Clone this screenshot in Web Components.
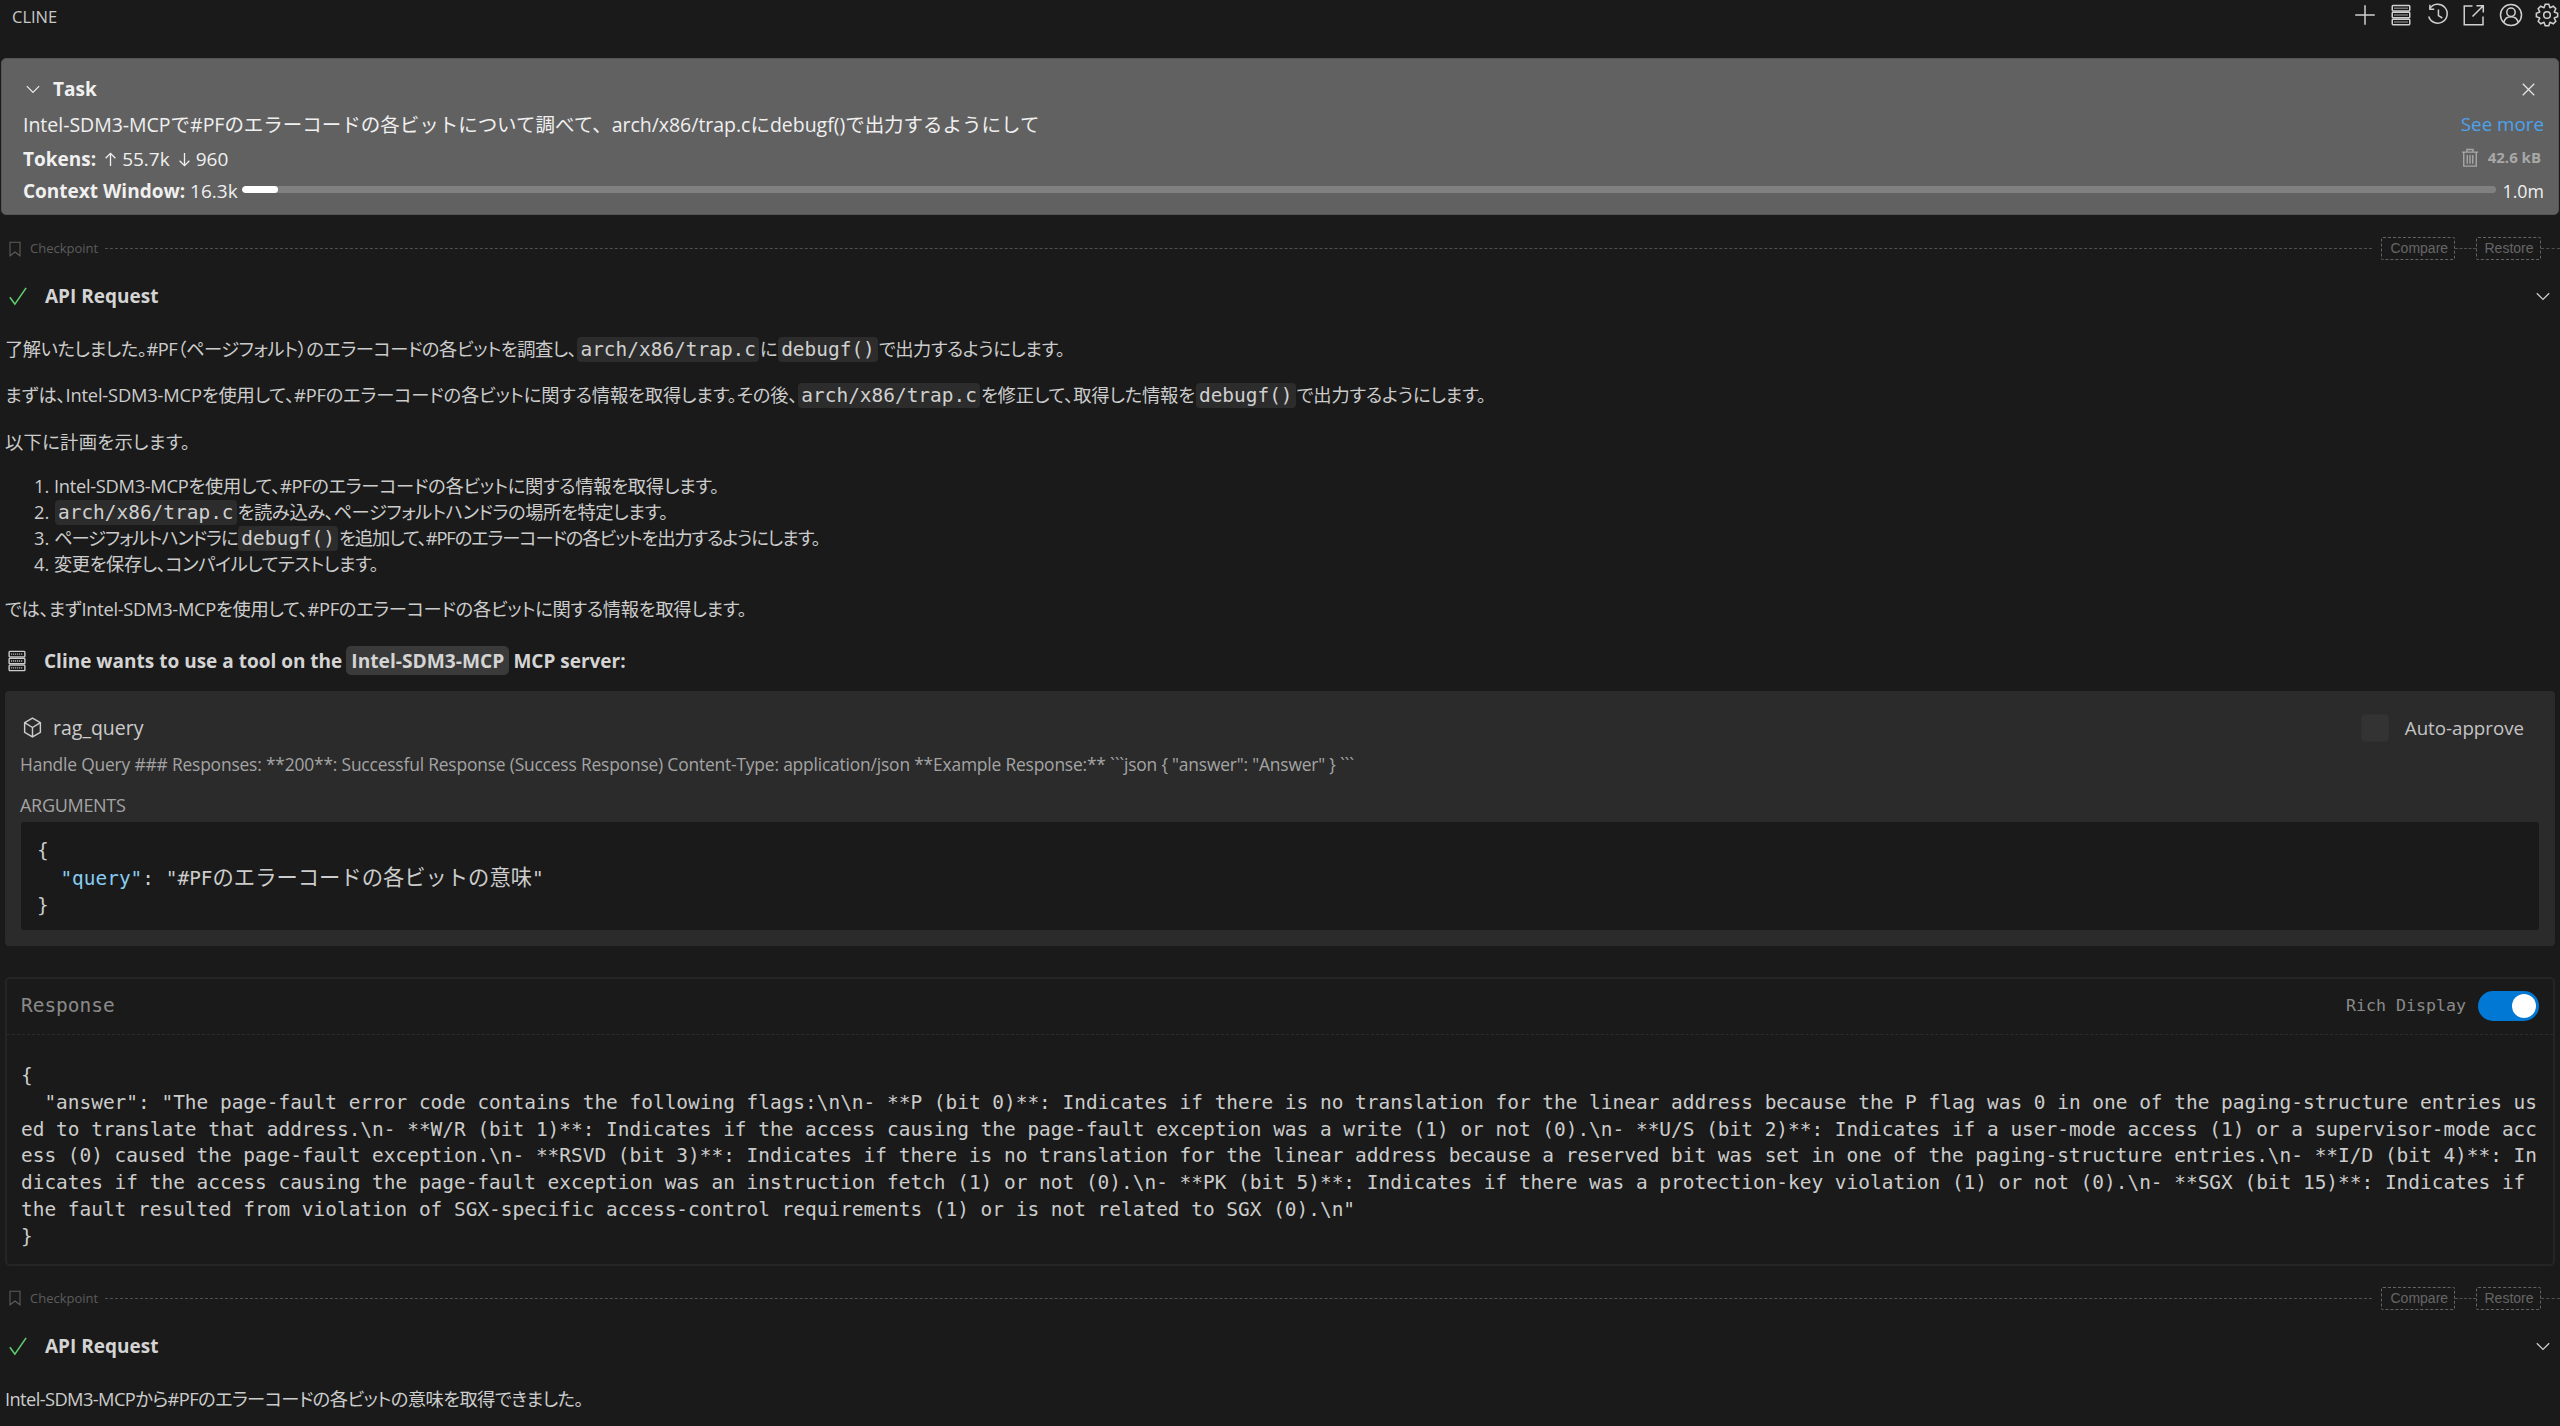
<!DOCTYPE html>
<html lang="ja">
<head>
<meta charset="utf-8">
<title>Cline</title>
<style>
html,body{margin:0;padding:0;background:#1a1a1a;}
body{height:1426px;overflow:hidden;color:#ccc;font:19px/26px "Open Sans","Noto Sans CJK JP",sans-serif;}
</style>
</head>
<body>
<cl-app></cl-app>
<script>
const SANS='"Open Sans","Noto Sans CJK JP",sans-serif';
const MONO='"DejaVu Sans Mono","Noto Sans CJK JP",monospace';
function gearPath(){
  const cx=8,cy=8,n=8;let d='';
  for(let i=0;i<n;i++){
    const a=i*2*Math.PI/n-Math.PI/2,w=Math.PI/n;
    const pts=[[5.3,a-w*0.95],[7.2,a-w*0.42],[7.2,a+w*0.42],[5.3,a+w*0.95]];
    pts.forEach((p,j)=>{d+=(i===0&&j===0?'M':'L')+(cx+p[0]*Math.cos(p[1])).toFixed(2)+' '+(cy+p[0]*Math.sin(p[1])).toFixed(2)+' ';});
  }
  return d+'Z';
}
const ICONS={
  plus:'<path d="M8 1.5v13M1.5 8h13"/>',
  server:'<rect x="1" y="1" width="14" height="4" rx=".6"/><rect x="1" y="6" width="14" height="4" rx=".6"/><rect x="1" y="11" width="14" height="4" rx=".6"/><path stroke-dasharray="1 1" d="M2.8 3h10.4M2.8 8h10.4M2.8 13h10.4"/>',
  history:'<path d="M2.6 3.6A6.3 6.3 0 1 1 1.8 9"/><path d="M2.6 1.2v2.9h2.9"/><path d="M8.3 4.4v4l2.6 1.6"/>',
  external:'<path d="M7 2H1.5v12.5H14V9"/><path d="M14 2L7 9M9.6 1.8h4.6v4.6"/>',
  account:'<circle cx="8" cy="8" r="7"/><circle cx="8" cy="6.2" r="2.8"/><path d="M3.2 13c.6-2.6 2.4-3.9 4.8-3.9s4.2 1.3 4.8 3.9"/>',
  gear:'<path d="'+gearPath()+'"/><circle cx="8" cy="8" r="2.2"/>',
  chevron:'<path d="M2.5 5.5L8 11l5.5-5.5"/>',
  close:'<path d="M2.6 2.6l10.8 10.8M13.4 2.6L2.6 13.4"/>',
  check:'<path d="M1.5 9l4 5.5L14.5 1.5"/>',
  trash:'<path d="M1.5 3.3h13M5.6 3V1.2h4.8V3M3 3.3v11.2h10V3.3M5.8 5.5v7M8 5.5v7M10.2 5.5v7"/>',
  bookmark:'<path d="M3 1.2h10v13.6L8 11l-5 3.8z"/>',
  cube:'<path d="M8 .9l6 3.4v7.4l-6 3.4-6-3.4V4.3zM2 4.3L8 8l6-3.7M8 8v7.5"/>',
  up:'<path d="M8 15V1.5M2.8 6.7L8 1.5l5.2 5.2"/>',
  down:'<path d="M8 1v13.5M2.8 9.3L8 14.5l5.2-5.2"/>'
};
class Base extends HTMLElement{
  connectedCallback(){
    if(this.shadowRoot)return;
    this.attachShadow({mode:'open'}).innerHTML=this.render();
  }
}
function def(name,render){customElements.define(name,class extends Base{render(){return render(this);}});}

def('cl-icon',el=>{
  const s=el.getAttribute('size')||16,h=el.getAttribute('tall')||s,w=el.getAttribute('stroke')||1;
  return `<style>:host{display:inline-flex;flex:none;line-height:0}svg{display:block;fill:none;stroke:currentColor;stroke-width:${w};overflow:visible}path,rect,circle{vector-effect:${el.hasAttribute('tall')?'non-scaling-stroke':'none'}}</style>
  <svg width="${s}" height="${h}" viewBox="0 0 16 16" preserveAspectRatio="none">${ICONS[el.getAttribute('name')]}</svg>`;
});

def('cl-code',()=>`<style>:host{display:inline-block;font:19.45px/25px ${MONO};letter-spacing:0;background:#2c2c2c;border-radius:4px;padding:0 3px;margin:0 1px;color:#d0d0d0;vertical-align:baseline}</style><slot></slot>`);

def('cl-header',()=>`<style>
:host{display:flex;align-items:flex-start;justify-content:space-between;height:58px;box-sizing:border-box}
.t{font:16.5px/34px ${SANS};color:#c8c8c8;padding-left:12px}
.i{display:flex;gap:12.5px;padding-top:3px;margin-right:1px;color:#d0d0d0}
.sv{margin:1px 2px 0}
</style><div class="t">CLINE</div><div class="i">
<cl-icon name="plus" size="24" stroke="1"></cl-icon><cl-icon class="sv" name="server" size="20" tall="22" stroke="1.5"></cl-icon><cl-icon name="history" size="24" stroke="1"></cl-icon><cl-icon name="external" size="24" stroke="1"></cl-icon><cl-icon name="account" size="24" stroke="1"></cl-icon><cl-icon name="gear" size="24" stroke="1"></cl-icon></div>`);

def('cl-task',()=>`<style>
:host{display:block;height:157px;box-sizing:border-box;margin:0 1px;background:#616161;border:1px solid #555;border-radius:5px;padding:14px 14px 0 21px;color:#f0f0f0;font:19px/31px ${SANS}}
.r{display:flex;align-items:center;justify-content:space-between}
.h{height:32px;margin-bottom:1px}
.l{display:flex;align-items:center;gap:11px;font-weight:700}
.l cl-icon{margin-left:1px}
.x{color:#e4e4e4;margin-right:7px}
.q{height:36px;font-size:19.5px;letter-spacing:-.02px}
a{color:#4ba3ee;text-decoration:none;font-size:18.8px;letter-spacing:0}
.tok{height:34px}
.sz{display:flex;align-items:center;gap:8px;color:#a8a8a8;font-size:15px;font-weight:700;margin:-3px 3px 0 0}
.a{display:inline-flex;align-items:center;gap:7px}
b{font-weight:700}
.ctx{height:30px;display:flex;align-items:center;gap:5px}
.bar{flex:1;height:7px;background:#808080;border-radius:4px;margin:-4px -1px 0 -1px;position:relative;overflow:hidden}
.fill{display:block;width:36px;height:7px;background:#fff;border-radius:4px}
.m{margin-left:2.5px;font-size:17.8px}
</style>
<div class="r h"><div class="l"><cl-icon name="chevron" size="18"></cl-icon>Task</div><cl-icon class="x" name="close" size="17" stroke="1.2"></cl-icon></div>
<div class="r q"><span>Intel-SDM3-MCPで#PFのエラーコードの各ビットについて調べて、arch/x86/trap.cにdebugf()で出力するようにして</span><a>See more</a></div>
<div class="r tok"><span class="a"><b>Tokens:</b><cl-icon name="up" size="15" stroke="1.4"></cl-icon><span style="margin-left:-3px">55.7k</span><cl-icon name="down" size="15" stroke="1.4"></cl-icon><span style="margin-left:-3px">960</span></span><span class="sz"><cl-icon name="trash" size="20" stroke="1.1"></cl-icon>42.6 kB</span></div>
<div class="ctx"><span><b>Context Window:</b> 16.3k</span><div class="bar"><span class="fill"></span></div><span class="m">1.0m</span></div>`);

def('cl-checkpoint',()=>`<style>
:host{display:flex;align-items:center;height:25px;color:#666;font:14px/25px "Liberation Sans",sans-serif}
cl-icon{margin-left:7px;margin-right:7px;color:#5c5c5c}
.n{font-family:${SANS};font-size:13px;color:#5c5c5c}
.d{flex:1;border-top:1.5px dashed #505050;margin:0 0 0 7px}
.d.s{flex:none;width:21px;margin:0}
.d.e{flex:none;width:19px;margin:0}
.d.m{margin-right:9px}
.b{border:1.5px dashed #636363;line-height:20px;padding:0 8.5px;border-radius:2px;box-sizing:border-box;height:23px}
.s1{width:74px}.s2{width:65px;padding:0 7.5px}
</style>
<cl-icon name="bookmark" size="16" stroke="1.1"></cl-icon><span class="n">Checkpoint</span><span class="d m"></span><span class="b s1">Compare</span><span class="d s"></span><span class="b s2">Restore</span><span class="d e"></span>`);

def('cl-api',()=>`<style>
:host{display:flex;align-items:center;height:40px;padding:0 8px 0 8px;font:700 19px/26px ${SANS};color:#d4d4d4}
.c{color:#5fc96d;margin-right:17px}
.s{flex:1}
.v{color:#ccc}
</style><cl-icon class="c" name="check" size="20" stroke="1.3"></cl-icon><span class="s">API Request</span><cl-icon class="v" name="chevron" size="18" stroke="1.2"></cl-icon>`);

def('cl-md',()=>`<style>
:host{display:block;padding:0 5px;font:18.3px/26px ${SANS};font-feature-settings:"palt";color:#ccc;letter-spacing:-.3px}
</style><slot></slot>`);

def('cl-para',()=>`<style>:host{display:block;margin-bottom:20.3px}</style><slot></slot>`);

def('cl-list-item',el=>`<style>:host{display:flex;height:26.1px;padding-left:29px}.n{width:20px;letter-spacing:0}</style><span class="n">${el.getAttribute('n')}.</span><span><slot></slot></span>`);

def('cl-tool-head',()=>`<style>
:host{display:flex;align-items:center;height:40px;padding-left:8px;font:700 19px/26px ${SANS};color:#d4d4d4;margin-top:1.5px}
cl-icon{margin-right:18px;color:#ccc}
.b{display:inline-block;background:#3a3a3a;border-radius:5px;padding:0 5px;line-height:29px;margin:0 4px;font-size:19.2px}
</style><cl-icon name="server" size="18" tall="22" stroke="1.4"></cl-icon><span>Cline wants to use a tool on the<span class="b">Intel-SDM3-MCP</span>MCP server:</span>`);

def('cl-tool-card',()=>`<style>
:host{display:block;box-sizing:border-box;height:255px;margin:10px 5px 0;background:#2b2b2b;border-radius:4px;padding:20px 16px 0 15px;color:#ccc;font:18.5px/26px ${SANS}}
.t{display:flex;align-items:center;height:34px}
.t cl-icon{margin:0 10px 0 2px}
.s{flex:1;font-size:19.5px}
.box{width:28px;height:28px;background:#333;border:1px solid #303030;box-sizing:border-box;border-radius:4px;margin-right:16px}
.ap{margin-right:15px;color:#c4c4c4;font-size:18.7px}
.d{color:#a4a4a4;font-size:17.4px;margin-top:6.5px;letter-spacing:-.18px;line-height:26px}
.a{color:#a4a4a4;font-size:18px;margin-top:14.5px;line-height:26px;letter-spacing:-.3px}
pre{margin:4px 0 0 1px;height:108px;box-sizing:border-box;background:#1a1a1a;border-radius:3px;padding:15px 16px 0;font:19.45px/27px ${MONO};color:#ccc}
i{font-style:normal;color:#86cdf2}
u{text-decoration:none;font-size:21.3px}
</style>
<div class="t"><cl-icon name="cube" size="21" stroke="1.1"></cl-icon><span class="s">rag_query</span><span class="box"></span><span class="ap">Auto-approve</span></div>
<div class="d">Handle Query ### Responses: **200**: Successful Response (Success Response) Content-Type: application/json **Example Response:** \`\`\`json { "answer": "Answer" } \`\`\`</div>
<div class="a">ARGUMENTS</div>
<pre>{
  <i>"query"</i>: "#PF<u>のエラーコードの各ビットの意味</u>"
}</pre>`);

def('cl-response',()=>`<style>
:host{display:block;box-sizing:border-box;height:289px;margin:31px 5px 0;border:2px solid #252525;border-radius:5px;font:19.45px/26.8px ${MONO};color:#ccc}
.h{display:flex;align-items:center;height:56px;box-sizing:border-box;border-bottom:1.5px dashed #2c2c2c;padding:0 14px 0 14px;color:#8a8a8a}
.h .s{flex:1}
.r{font-size:16.6px;margin-right:12px}
.sw{width:61px;height:30px;background:#0078d4;border-radius:15px;display:flex;align-items:center;justify-content:flex-end;padding-right:3px;box-sizing:border-box}
.k{width:24px;height:24px;border-radius:50%;background:#fff}
pre{margin:0;padding:28px 0 0 14px;font:inherit;white-space:pre}
</style>
<div class="h"><span class="s">Response</span><span class="r">Rich Display</span><span class="sw"><span class="k"></span></span></div>
<pre>{
  "answer": "The page-fault error code contains the following flags:\\n\\n- **P (bit 0)**: Indicates if there is no translation for the linear address because the P flag was 0 in one of the paging-structure entries us
ed to translate that address.\\n- **W/R (bit 1)**: Indicates if the access causing the page-fault exception was a write (1) or not (0).\\n- **U/S (bit 2)**: Indicates if a user-mode access (1) or a supervisor-mode acc
ess (0) caused the page-fault exception.\\n- **RSVD (bit 3)**: Indicates if there is no translation for the linear address because a reserved bit was set in one of the paging-structure entries.\\n- **I/D (bit 4)**: In
dicates if the access causing the page-fault exception was an instruction fetch (1) or not (0).\\n- **PK (bit 5)**: Indicates if there was a protection-key violation (1) or not (0).\\n- **SGX (bit 15)**: Indicates if
the fault resulted from violation of SGX-specific access-control requirements (1) or is not related to SGX (0).\\n"
}</pre>`);

def('cl-app',()=>`<style>
:host{display:block}
.c1{margin-top:21px}.a1{margin-top:15px}.m1{margin-top:20px}
.c2{margin-top:20px}.a2{margin-top:15px}.m2{margin-top:20px}
</style>
<cl-header></cl-header>
<cl-task></cl-task>
<cl-checkpoint class="c1"></cl-checkpoint>
<cl-api class="a1"></cl-api>
<cl-md class="m1">
<cl-para style="letter-spacing:-.46px">了解いたしました。#PF（ページフォルト）のエラーコードの各ビットを調査し、<cl-code>arch/x86/trap.c</cl-code>に<cl-code>debugf()</cl-code>で出力するようにします。</cl-para>
<cl-para style="letter-spacing:-.17px">まずは、Intel-SDM3-MCPを使用して、#PFのエラーコードの各ビットに関する情報を取得します。その後、<cl-code>arch/x86/trap.c</cl-code>を修正して、取得した情報を<cl-code>debugf()</cl-code>で出力するようにします。</cl-para>
<cl-para style="margin-bottom:18px;letter-spacing:.3px">以下に計画を示します。</cl-para>
<cl-list-item n="1">Intel-SDM3-MCPを使用して、#PFのエラーコードの各ビットに関する情報を取得します。</cl-list-item>
<cl-list-item n="2" style="letter-spacing:-.4px"><cl-code>arch/x86/trap.c</cl-code>を読み込み、ページフォルトハンドラの場所を特定します。</cl-list-item>
<cl-list-item n="3" style="letter-spacing:-1.1px">ページフォルトハンドラに<cl-code>debugf()</cl-code>を追加して、#PFのエラーコードの各ビットを出力するようにします。</cl-list-item>
<cl-list-item n="4" style="letter-spacing:-.45px">変更を保存し、コンパイルしてテストします。</cl-list-item>
<cl-para style="margin-top:19px;margin-bottom:19px">では、まずIntel-SDM3-MCPを使用して、#PFのエラーコードの各ビットに関する情報を取得します。</cl-para>
</cl-md>
<cl-tool-head></cl-tool-head>
<cl-tool-card></cl-tool-card>
<cl-response></cl-response>
<cl-checkpoint class="c2"></cl-checkpoint>
<cl-api class="a2"></cl-api>
<cl-md class="m2"><cl-para style="letter-spacing:-.6px">Intel-SDM3-MCPから#PFのエラーコードの各ビットの意味を取得できました。</cl-para></cl-md>`);
</script>
</body>
</html>
